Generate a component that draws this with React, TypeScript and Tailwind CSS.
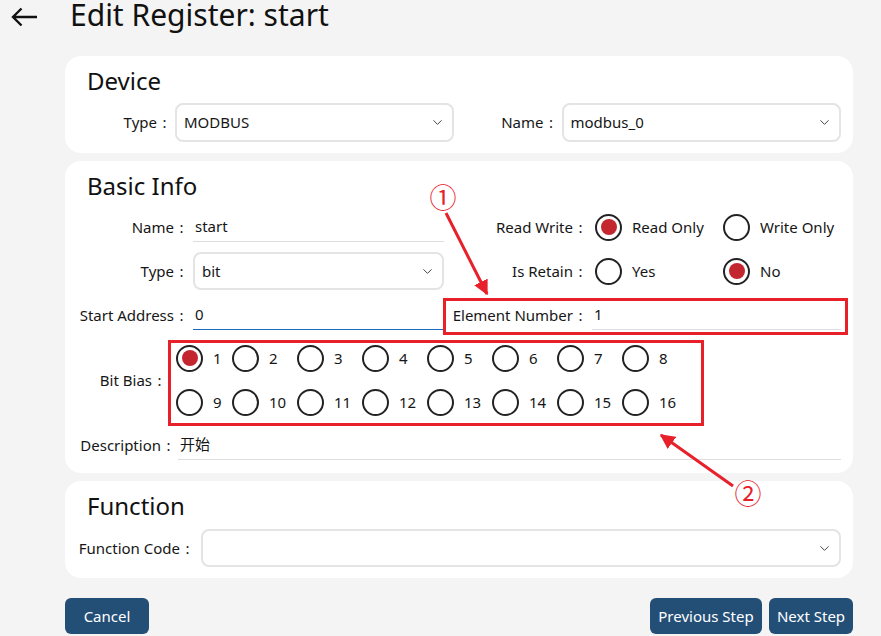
import React from 'react';
import { ChevronDown } from 'lucide-react';

// Field label with a centred, full-width style colon, right aligned
const Label: React.FC<{ text: string; className: string }> = ({ text, className }) => (
  <div className={`shrink-0 text-right whitespace-nowrap ${className}`}>
    {text}
    <span className="inline-block w-[15px] text-center">:</span>
  </div>
);

const Select: React.FC<{ value?: string; className?: string }> = ({ value, className = '' }) => (
  <div
    className={`flex items-center justify-between border-2 border-[#e4e4e4] rounded-lg pl-[7px] pr-[7px] bg-white ${className}`}
  >
    <span>{value}</span>
    <ChevronDown size={15} strokeWidth={1.6} className="text-[#444]" />
  </div>
);

const Radio: React.FC<{ checked?: boolean }> = ({ checked }) => (
  <span className="w-[27px] h-[27px] rounded-full border-2 border-[#222] flex items-center justify-center shrink-0">
    {checked && <span className="w-[16px] h-[16px] rounded-full bg-[#c4262f]" />}
  </span>
);

const RadioOption: React.FC<{ label: string; checked?: boolean; className?: string }> = ({
  label,
  checked,
  className = '',
}) => (
  <div className={`flex items-center gap-[10px] ${className}`}>
    <Radio checked={checked} />
    <span>{label}</span>
  </div>
);

const Card: React.FC<{ title: string; className?: string; children: React.ReactNode }> = ({
  title,
  className = '',
  children,
}) => (
  <div className={`bg-white rounded-2xl pl-[11px] pr-[12px] pt-[8px] ${className}`}>
    <div className="pl-[11px] h-[34px] text-[24px] leading-[34px] text-[#111]">{title}</div>
    {children}
  </div>
);

const bits = Array.from({ length: 16 }, (_, i) => i + 1);

export default function App() {
  return (
    <div className="relative w-[881px] h-[636px] overflow-hidden bg-[#f4f4f4] text-[15px] text-[#161616] font-['Noto_Sans','Noto_Sans_CJK_SC',sans-serif]">
      {/* Header */}
      <div className="flex items-center h-[30px]">
        <svg width="27" height="20" viewBox="0 0 27 20" className="ml-[11px] mt-[4px]">
          <path d="M2 10 H26 M10.5 1.5 L2 10 L10.5 18.5" fill="none" stroke="#111" strokeWidth="2.4" />
        </svg>
        <h1 className="ml-[32px] text-[30px] leading-[30px] text-[#111] whitespace-nowrap">Edit Register: start</h1>
      </div>

      <div className="ml-[65px] w-[788px] mt-[26px] flex flex-col gap-[8px]">
        {/* Device */}
        <Card title="Device" className="pb-[11px]">
          <div className="mt-[5px] flex gap-[10px]">
            <div className="flex-1 flex items-center">
              <Label text="Type" className="w-[96px]" />
              <Select value="MODBUS" className="ml-[3px] flex-1 h-[39px]" />
            </div>
            <div className="flex-1 flex items-center">
              <Label text="Name" className="w-[95px]" />
              <Select value="modbus_0" className="ml-[3px] flex-1 h-[39px]" />
            </div>
          </div>
        </Card>

        {/* Basic Info */}
        <Card title="Basic Info" className="pb-[8px]">
          <div className="mt-[4px] grid grid-cols-[368px_1fr] gap-x-[7px] gap-y-[4px]">
            <div className="h-[40px] flex items-center">
              <Label text="Name" className="w-[113px]" />
              <div className="ml-[4px] flex-1 h-[30px] border-b border-[#dedede] flex items-center pl-[2px]">start</div>
            </div>
            <div className="h-[40px] flex items-center">
              <Label text="Read Write" className="w-[137px]" />
              <RadioOption label="Read Only" checked className="ml-[7px] w-[128px]" />
              <RadioOption label="Write Only" />
            </div>

            <div className="h-[40px] flex items-center">
              <Label text="Type" className="w-[113px]" />
              <Select value="bit" className="ml-[4px] flex-1 h-[38px]" />
            </div>
            <div className="h-[40px] flex items-center">
              <Label text="Is Retain" className="w-[137px]" />
              <RadioOption label="Yes" className="ml-[7px] w-[128px]" />
              <RadioOption label="No" checked />
            </div>

            <div className="h-[40px] flex items-center">
              <Label text="Start Address" className="w-[113px]" />
              <div className="ml-[4px] flex-1 h-[30px] border-b-[1.5px] border-[#1a6cc0] flex items-center pl-[2px]">0</div>
            </div>
            <div className="h-[40px] flex items-center">
              <Label text="Element Number" className="w-[137px]" />
              <div className="ml-[4px] flex-1 h-[30px] border-b border-[#dedede] flex items-center pl-[2px]">1</div>
            </div>
          </div>

          <div className="mt-[1px] h-[88px] flex items-center">
            <Label text="Bit Bias" className="w-[91px]" />
            <div className="ml-[9px] grid grid-cols-[56px_repeat(7,65px)]">
              {bits.map((b) => (
                <div key={b} className="h-[44px] flex items-center">
                  <RadioOption label={String(b)} checked={b === 1} />
                </div>
              ))}
            </div>
          </div>

          <div className="mt-[1px] h-[40px] flex items-center">
            <Label text="Description" className="w-[100px]" />
            <div className="ml-[2px] flex-1 h-[30px] border-b border-[#dedede] flex items-center pl-[2px]">开始</div>
          </div>
        </Card>

        {/* Function */}
        <Card title="Function" className="pb-[11px]">
          <div className="mt-[6px] flex items-center">
            <Label text="Function Code" className="w-[119px]" />
            <Select className="ml-[6px] flex-1 h-[38px]" />
          </div>
        </Card>

        {/* Footer buttons */}
        <div className="mt-[12px] flex items-center gap-[7px] text-white">
          <button className="h-[36px] w-[84px] rounded-md bg-[#234f77]">Cancel</button>
          <div className="flex-1" />
          <button className="h-[36px] w-[112px] rounded-md bg-[#234f77]">Previous Step</button>
          <button className="h-[36px] w-[84px] rounded-md bg-[#234f77]">Next Step</button>
        </div>
      </div>

      {/* Annotation overlay */}
      <svg className="absolute left-0 top-0 pointer-events-none" width="881" height="636" viewBox="0 0 881 636">
        <defs>
          <marker id="head" viewBox="0 0 10 10" refX="9" refY="5" markerWidth="5" markerHeight="5" orient="auto">
            <path d="M0 0 L10 5 L0 10 z" fill="#e8202a" />
          </marker>
        </defs>
        <rect x="444.5" y="299.5" width="402" height="34" fill="none" stroke="#e8202a" strokeWidth="3" />
        <rect x="169.5" y="341.5" width="533" height="83" fill="none" stroke="#e8202a" strokeWidth="3" />
        <line x1="446" y1="213" x2="487" y2="294" stroke="#e8202a" strokeWidth="3" markerEnd="url(#head)" />
        <line x1="733" y1="486" x2="661" y2="435" stroke="#e8202a" strokeWidth="3" markerEnd="url(#head)" />
        <text x="443" y="208" textAnchor="middle" fontSize="27" fill="#e8202a" fontFamily="Noto Sans CJK JP, sans-serif">①</text>
        <text x="748" y="504" textAnchor="middle" fontSize="27" fill="#e8202a" fontFamily="Noto Sans CJK JP, sans-serif">②</text>
      </svg>
    </div>
  );
}
